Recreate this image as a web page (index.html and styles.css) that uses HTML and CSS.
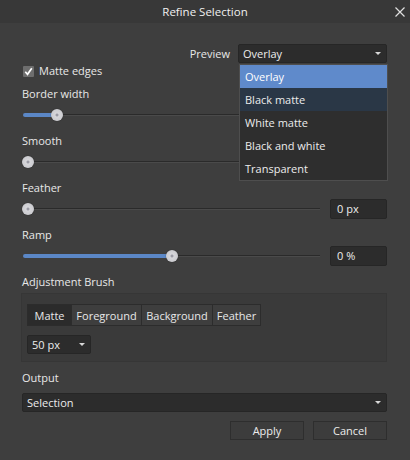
FILE: index.html
```html
<!DOCTYPE html>
<html>
<head>
<meta charset="utf-8">
<link rel="stylesheet" href="styles.css">
</head>
<body>
<div class="dialog">
  <div class="titlebar">
    <span class="title">Refine Selection</span>
    <svg class="close" width="10" height="10" viewBox="0 0 10 10"><path d="M0.5 0.5 L9.5 9.5 M9.5 0.5 L0.5 9.5" stroke="#e0e0e0" stroke-width="1.2" fill="none"/></svg>
  </div>
  <div class="content">
    <div class="preview-row">
      <span class="label">Preview</span>
      <div class="select preview-select"><span>Overlay</span><span class="arrow"></span></div>
    </div>
    <div class="check-row">
      <span class="checkbox"><svg width="11" height="11" viewBox="0 0 11 11"><path d="M2.3 5.8 L4.5 8.3 L8.8 2.2" stroke="#ffffff" stroke-width="1.7" fill="none"/></svg></span>
      <span class="label">Matte edges</span>
    </div>

    <div class="field">
      <div class="label">Border width</div>
      <div class="slider-row">
        <div class="slider"><div class="groove"></div><div class="fill" style="width:33px"></div><div class="knob" style="left:35px"></div></div>
        <div class="numbox">2 px</div>
      </div>
    </div>
    <div class="field">
      <div class="label">Smooth</div>
      <div class="slider-row">
        <div class="slider"><div class="groove"></div><div class="knob" style="left:6px"></div></div>
        <div class="numbox">0</div>
      </div>
    </div>
    <div class="field">
      <div class="label">Feather</div>
      <div class="slider-row">
        <div class="slider"><div class="groove"></div><div class="knob" style="left:6px"></div></div>
        <div class="numbox">0 px</div>
      </div>
    </div>
    <div class="field">
      <div class="label">Ramp</div>
      <div class="slider-row">
        <div class="slider"><div class="groove"></div><div class="fill" style="width:148px"></div><div class="knob" style="left:150px"></div></div>
        <div class="numbox">0 %</div>
      </div>
    </div>

    <div class="label section-label">Adjustment Brush</div>
    <div class="group">
      <div class="tabs">
        <span class="tab active t-matte">Matte</span>
        <span class="tab t-fg">Foreground</span>
        <span class="tab t-bg">Background</span>
        <span class="tab t-feather">Feather</span>
      </div>
      <div class="select size-select"><span>50 px</span><span class="arrow"></span></div>
    </div>

    <div class="label output-label">Output</div>
    <div class="select output-select"><span>Selection</span><span class="arrow"></span></div>

    <div class="buttons">
      <span class="btn">Apply</span>
      <span class="btn">Cancel</span>
    </div>
  </div>

  <div class="dropdown-list">
    <div class="item selected">Overlay</div>
    <div class="item hover">Black matte</div>
    <div class="item">White matte</div>
    <div class="item">Black and white</div>
    <div class="item">Transparent</div>
  </div>
</div>
</body>
</html>
```

FILE: styles.css
```css
html, body {
  margin: 0;
  padding: 0;
  background: #3e3e3e;
}
.dialog {
  position: relative;
  width: 410px;
  height: 460px;
  background: #3e3e3e;
  font-family: "Open Sans", "Noto Sans", sans-serif;
  font-size: 11px;
  color: #e8e8e8;
  overflow: hidden;
}
.titlebar {
  height: 23px;
  background: #383838;
  display: flex;
  align-items: center;
  justify-content: center;
  position: relative;
}
.title {
  font-size: 11.5px;
  color: #f0f0f0;
}
.close {
  position: absolute;
  right: 5px;
  top: 7px;
}
.content {
  padding: 0 23px 0 22px;
  display: flex;
  flex-direction: column;
}
.label {
  line-height: 16px;
  height: 16px;
  white-space: nowrap;
}
.preview-row {
  margin-top: 21px;
  height: 19px;
  display: flex;
  justify-content: flex-end;
  align-items: center;
  gap: 8px;
}
.select {
  box-sizing: border-box;
  height: 19px;
  background: #2c2c2c;
  border: 1px solid #262626;
  border-radius: 2px;
  display: flex;
  align-items: center;
  justify-content: space-between;
  padding: 0 5px 0 4px;
  color: #ececec;
}
.arrow {
  width: 0;
  height: 0;
  border-left: 3px solid transparent;
  border-right: 3px solid transparent;
  border-top: 3px solid #d8d8d8;
}
.preview-select {
  width: 149px;
}
.check-row {
  height: 16px;
  display: flex;
  align-items: center;
  gap: 5px;
  padding-left: 1px;
}
.checkbox {
  width: 11px;
  height: 11px;
  background: #6e6e6e;
  border-radius: 1px;
  display: flex;
}
.field {
  display: flex;
  flex-direction: column;
}
.check-row + .field {
  margin-top: 7px;
}
.field + .field {
  margin-top: 8px;
}
.field .label {
  margin-bottom: 3px;
}
.slider-row {
  height: 20px;
  display: flex;
  align-items: center;
  gap: 10px;
}
.slider {
  position: relative;
  flex: 1;
  height: 20px;
}
.groove {
  position: absolute;
  left: 1px;
  right: 0;
  top: 9px;
  height: 1px;
  background: #2a2a2a;
  border-bottom: 1px solid #4a4a4a;
}
.fill {
  position: absolute;
  left: 1px;
  top: 8px;
  height: 4px;
  border-radius: 2px;
  background: #5b87c6;
}
.knob {
  position: absolute;
  top: 4px;
  width: 12px;
  height: 12px;
  margin-left: -6px;
  border-radius: 50%;
  background: radial-gradient(circle at 50% 50%, #9a9aa4 0, #9a9aa4 1.2px, #d6d6da 1.8px, #c4c4c8 100%);
  box-shadow: 0 0 1px #222;
}
.numbox {
  box-sizing: border-box;
  width: 57px;
  height: 20px;
  background: #2c2c2c;
  border: 1px solid #262626;
  border-radius: 2px;
  padding-left: 6px;
  line-height: 18px;
  color: #ececec;
}
.section-label {
  margin-top: 8px;
}
.group {
  margin-top: 3px;
  margin-left: -1px;
  box-sizing: border-box;
  height: 69px;
  background: #3a3a3a;
  border: 1px solid #363636;
  padding: 10px 5px 0 5px;
  display: flex;
  flex-direction: column;
  align-items: flex-start;
}
.tabs {
  display: flex;
  height: 22px;
  border: 1px solid #2c2c2c;
  box-sizing: border-box;
  background: #3e3e3e;
}
.tab {
  box-sizing: border-box;
  display: flex;
  align-items: center;
  justify-content: center;
  border-left: 1px solid #2c2c2c;
  color: #e8e8e8;
  white-space: nowrap;
}
.tab:first-child {
  border-left: none;
}
.tab.active {
  background: #2b2b2b;
}
.t-matte { width: 43px; }
.t-fg { width: 70px; }
.t-bg { width: 71px; }
.t-feather { width: 48px; }
.size-select {
  margin-top: 9px;
  width: 64px;
}
.output-label {
  margin-top: 8px;
}
.output-select {
  margin-top: 7px;
  width: 100%;
}
.buttons {
  margin-top: 9px;
  display: flex;
  justify-content: flex-end;
  gap: 9px;
}
.btn {
  box-sizing: border-box;
  width: 74px;
  height: 19px;
  display: flex;
  align-items: center;
  justify-content: center;
  background: #3c3c3c;
  border: 1px solid #2e2e2e;
  color: #ececec;
}
.dropdown-list {
  position: absolute;
  left: 239px;
  top: 64px;
  width: 149px;
  box-sizing: border-box;
  background: #2e2e2e;
  border: 1px solid #4e4e4e;
  padding: 0;
}
.item {
  height: 23px;
  line-height: 23px;
  padding-left: 5px;
  color: #ececec;
}
.item.selected {
  background: #5f8acb;
  color: #ffffff;
}
.item.hover {
  background: #2a3746;
}
```
